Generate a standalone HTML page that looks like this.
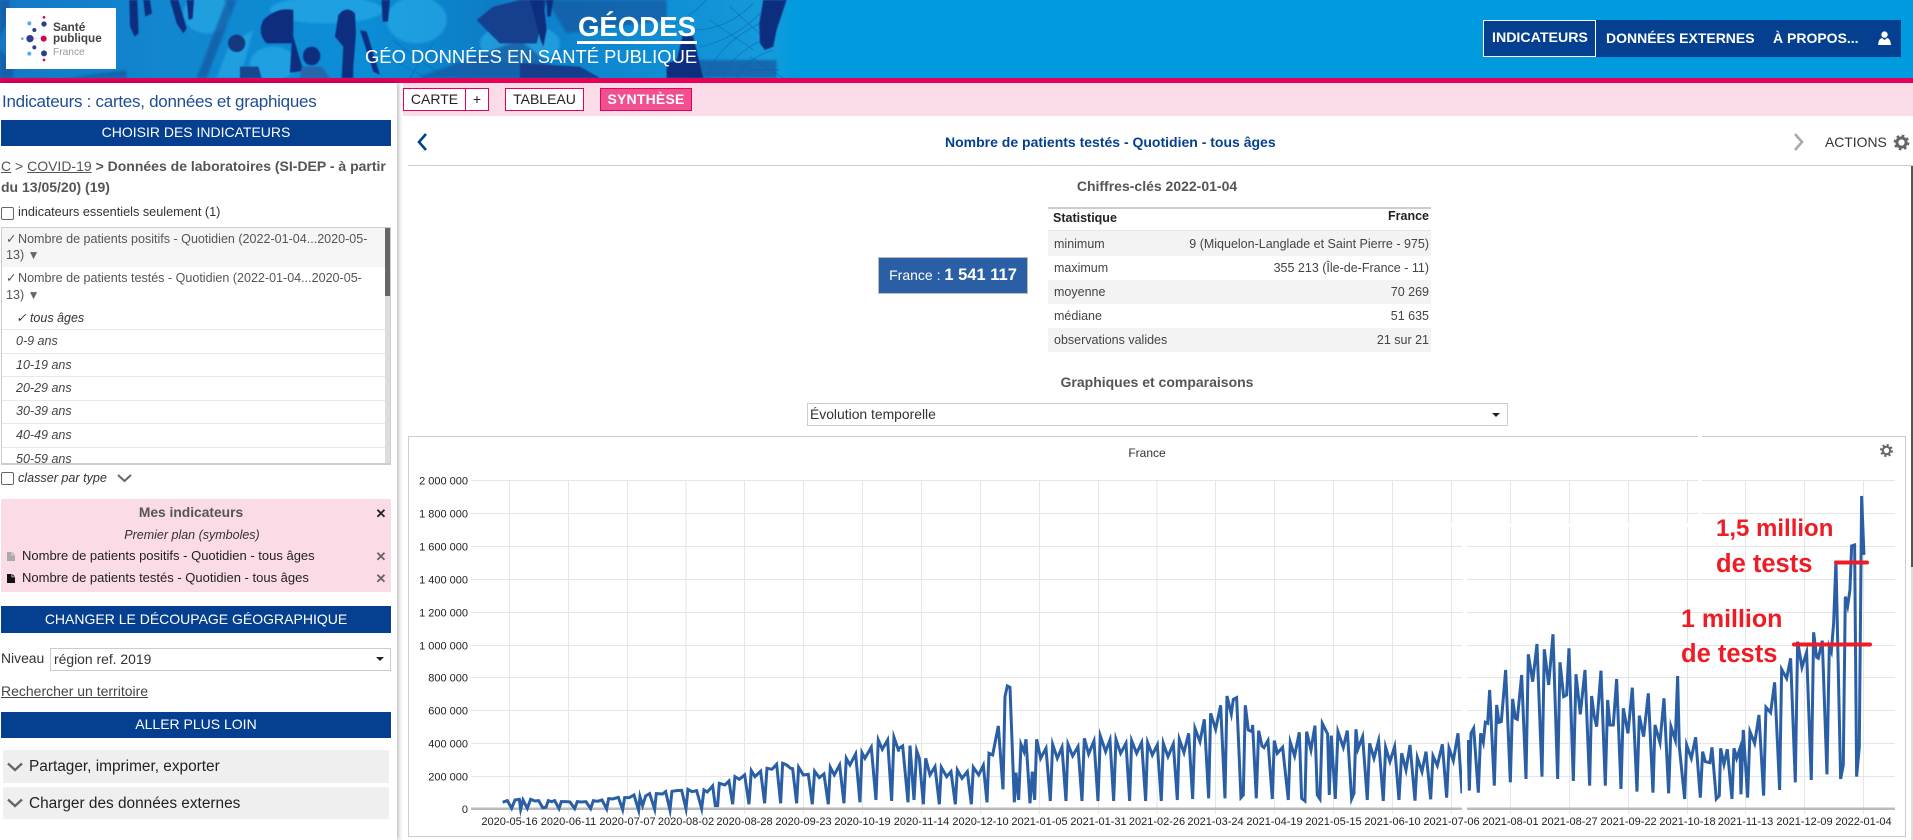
<!DOCTYPE html>
<html lang="fr"><head><meta charset="utf-8"><title>GÉODES</title>
<style>
html,body{margin:0;padding:0;width:1913px;height:840px;overflow:hidden;background:#fff;font-family:"Liberation Sans",Arial,sans-serif;color:#333}
.a{position:absolute}
.t{position:absolute;white-space:nowrap;line-height:20px;height:20px}
.bar{position:absolute;left:1px;width:390px;background:#04408f;color:#fff;text-align:center;font-size:14px}
.sep{position:absolute;left:2px;width:383px;height:1px;background:#e8e8e8}
.it{position:absolute;left:16px;font-style:italic;font-size:12.5px;line-height:20px;white-space:nowrap;color:#444}
.tab{position:absolute;top:88px;height:21px;line-height:21px;border:1px solid #e6005a;background:#fff;color:#222;font-size:14px;text-align:center}
.cb{position:absolute;width:11px;height:11px;border:1px solid #666;border-radius:2px;background:#fff}
.row{position:absolute;left:1048px;width:383px;height:24px;line-height:24px;font-size:12.5px;color:#444}
.row b{font-weight:normal;position:absolute;left:6px}
.row i{font-style:normal;position:absolute;right:2px}
.ck{margin-right:-2px}
.dn{font-size:12px;color:#666}
</style></head><body>

<!-- header -->
<svg class="a" style="left:0;top:0" width="1913" height="78" viewBox="0 0 1913 78">
<defs>
<linearGradient id="h" x1="0" x2="1" y1="0" y2="0"><stop offset="0" stop-color="#1478c4"/><stop offset=".2" stop-color="#1286cf"/><stop offset=".45" stop-color="#0b8ed6"/><stop offset=".62" stop-color="#0d7cc6"/><stop offset=".8" stop-color="#0e8bd2"/><stop offset=".97" stop-color="#159bdc"/><stop offset="1" stop-color="#009bdf"/></linearGradient>
<filter id="bl"><feGaussianBlur stdDeviation="3"/></filter>
<filter id="bs"><feGaussianBlur stdDeviation="1.6"/></filter>
</defs>
<rect width="1913" height="78" fill="#009bdf"/>
<rect width="795" height="78" fill="url(#h)"/>
<g transform="scale(.3333)">
<g filter="url(#bl)" fill="#2fb2ec" opacity=".55">
<ellipse cx="620" cy="40" rx="70" ry="60"/><ellipse cx="980" cy="30" rx="170" ry="40"/><ellipse cx="1250" cy="60" rx="90" ry="70"/>
<ellipse cx="820" cy="190" rx="70" ry="50"/><ellipse cx="1560" cy="130" rx="120" ry="60"/><path d="M690 130 L760 90 L720 234 L650 234Z"/>
</g>
<g filter="url(#bl)" fill="#17569f" opacity=".7">
<path d="M0 0H30L20 70L0 110Z"/><path d="M0 150 L40 190 L40 234 H0Z"/><path d="M680 0h30L620 234H590Z"/>
<path d="M1250 234 L1560 120 L1700 234Z"/><path d="M1640 0H2000V60L1700 100Z"/>
<path d="M2050 180H2330V234H2050Z"/><path d="M200 234L380 210V234Z"/>
</g>
<g fill="none" stroke="#0c5aa6" stroke-width="2" opacity=".65">
<path d="M2120 234Q2150 130 2300 60M2170 234Q2190 160 2310 110M2210 234Q2230 180 2320 150M2100 140Q2200 120 2280 40M2080 90Q2180 90 2260 10M2000 80Q2060 60 2120 0M2240 210H2340M2250 170L2350 234M2130 60L2260 150M2190 20L2300 120"/>
<path d="M1100 140Q1180 180 1280 234M1180 120Q1240 170 1340 234M1300 130Q1260 180 1230 234"/>
</g>
<g filter="url(#bs)" fill="#0f2f7e">
<path d="M388 0h24l4 100-12 10-14-30Z"/><path d="M430 0h20l6 40-20 10Z"/><path d="M510 0h25l25 85-10 15-20-30Z"/><path d="M560 0h22l-4 55-12 5Z"/>
<path d="M790 60 Q830 20 880 30 L880 110 L905 195 L915 212 L870 218 L875 130 L800 130 Q770 100 790 60Z"/>
<ellipse cx="710" cy="130" rx="26" ry="26" fill="#12397f"/>
<ellipse cx="935" cy="168" rx="26" ry="28"/><path d="M905 200h60l25 34H900Z" fill="#2666aa"/>
<path d="M1015 45 Q1040 15 1065 40 L1068 100 L1060 200 L1060 234 H1025 L1030 140 L1005 110Z"/>
<path d="M1080 90 L1100 95 L1140 225 L1120 215Z"/>
<path d="M1145 0h25l-6 65-16 0Z"/>
<path d="M1430 60 L1480 20 L1560 0 L1640 0 L1610 130 L1500 130Z" fill="#123f8e"/>
<path d="M720 200 L775 200 L785 234 H720Z" fill="#17478f"/>
<path d="M1590 0h40l10 90 -10 50 -8-20Z"/><path d="M1640 0h20l-8 50-10 0Z"/>
<path d="M1560 190 L1740 200 L1800 234 H1560Z" fill="#133d8c"/>
<path d="M2050 100 L2080 110 L2110 234 H2000 L2000 190 L2030 180Z"/>
<path d="M2290 0h70l-30 90 -10 50 -25 10 -15-20 -2-60Z"/>
</g>
</g>
</svg>

<!-- logo -->
<div class="a" style="left:6px;top:8px;width:110px;height:61px;background:#fff"></div>
<svg class="a" style="left:0;top:0" width="120" height="75" viewBox="0 0 360 225">
<g stroke="#d8d8e6" stroke-width="1.5"><path d="M90 116H132M103 90L132 116M103 142L132 116M132 72V160"/></g>
<circle cx="132" cy="52" r="4" fill="#d6004f"/><circle cx="88" cy="70" r="6" fill="#5aa9e6"/><circle cx="132" cy="72" r="8" fill="#2c3e8c"/><circle cx="103" cy="90" r="6" fill="#2c3e8c"/><circle cx="67" cy="116" r="4" fill="#5aa9e6"/><circle cx="90" cy="116" r="11" fill="#2c3e8c"/><circle cx="131" cy="116" r="9" fill="#d6004f"/><circle cx="103" cy="142" r="6" fill="#2c3e8c"/><circle cx="88" cy="161" r="6" fill="#5aa9e6"/><circle cx="132" cy="160" r="9" fill="#2c3e8c"/><circle cx="132" cy="180" r="4" fill="#d6004f"/>
</svg>
<div class="t" style="left:53px;top:17px;font-size:11.9px;font-weight:bold;color:#444">Santé</div>
<div class="t" style="left:53px;top:29px;font-size:11.7px;font-weight:bold;color:#444">publique</div>
<div class="t" style="left:53px;top:43px;font-size:10.2px;color:#999">France</div>

<div class="t" style="left:577px;top:15px;width:120px;text-align:center;font-size:27.6px;font-weight:bold;color:#fff;line-height:24px;height:24px">GÉODES</div>
<div class="a" style="left:577px;top:41px;width:120px;height:3px;background:#fff"></div>
<div class="t" style="left:365px;top:47px;font-size:18.4px;color:#fff">GÉO DONNÉES EN SANTÉ PUBLIQUE</div>

<div class="a" style="left:1483px;top:20px;width:418px;height:37px;background:#04408f"></div>
<div class="a" style="left:1483px;top:20px;width:111px;height:35px;border:1px solid #fff"></div>
<div class="t" style="left:1492px;top:28px;font-size:14.2px;font-weight:bold;color:#fff">INDICATEURS</div>
<div class="t" style="left:1606px;top:28px;font-size:14px;font-weight:bold;color:#fff">DONNÉES EXTERNES</div>
<div class="t" style="left:1773px;top:28px;font-size:14px;font-weight:bold;color:#fff">À PROPOS...</div>
<svg class="a" style="left:1877px;top:31px" width="15" height="14" viewBox="0 0 15 14"><circle cx="7.5" cy="3.6" r="3.2" fill="#fff"/><path d="M1 14 Q1.5 7.5 5 7 L7.5 9 L10 7 Q13.5 7.5 14 14Z" fill="#fff"/></svg>

<div class="a" style="left:0;top:78px;width:1913px;height:5px;background:#e6005a"></div>

<!-- pink bar -->
<div class="a" style="left:403px;top:83px;width:1510px;height:33px;background:#fadbe8"></div>
<div class="tab" style="left:403px;width:61px">CARTE</div>
<div class="tab" style="left:465px;width:22px">+</div>
<div class="tab" style="left:505px;width:77px">TABLEAU</div>
<div class="tab" style="left:600px;width:90px;background:#f0508f;color:#fff;font-weight:bold;letter-spacing:.2px">SYNTHÈSE</div>

<!-- left panel -->
<div class="a" style="left:0;top:83px;width:397px;height:757px;box-shadow:1px 0 5px rgba(0,0,0,.35);background:#fff"></div>
<div class="t" style="left:2px;top:92px;font-size:17px;letter-spacing:-.27px;color:#1d4f96">Indicateurs : cartes, données et graphiques</div>
<div class="bar" style="top:120px;height:26px;line-height:25px">CHOISIR DES INDICATEURS</div>
<div class="t" style="left:1px;top:156px;font-size:14px;color:#555"><u>C</u> &gt; <u>COVID-19</u> <b>&gt; Données de laboratoires (SI-DEP - à partir</b></div>
<div class="t" style="left:1px;top:177px;font-size:14px;color:#555"><b>du 13/05/20) (19)</b></div>
<div class="cb" style="left:1px;top:207px"></div>
<div class="t" style="left:18px;top:202px;font-size:12.7px;color:#333">indicateurs essentiels seulement (1)</div>

<div class="a" style="left:1px;top:227px;width:388px;height:236px;border:1px solid #ccc;overflow:hidden;background:#fff">
<div class="a" style="left:0;top:0;width:383px;height:39px;background:#f5f5f5"></div>
</div>
<div class="a" style="left:385px;top:228px;width:5px;height:236px;background:#ddd"></div>
<div class="a" style="left:385px;top:228px;width:5px;height:68px;background:#666"></div>
<div class="t" style="left:6px;top:229px;font-size:12.55px;color:#555"><span class="ck">✓</span> Nombre de patients positifs - Quotidien (2022-01-04...2020-05-</div>
<div class="t" style="left:6px;top:245px;font-size:12.55px;color:#555">13) <span class="dn">▼</span></div>
<div class="t" style="left:6px;top:268px;font-size:12.55px;color:#555"><span class="ck">✓</span> Nombre de patients testés - Quotidien (2022-01-04...2020-05-</div>
<div class="t" style="left:6px;top:285px;font-size:12.55px;color:#555">13) <span class="dn">▼</span></div>
<div class="it" style="top:308px;color:#333">✓ tous âges</div>
<div class="sep" style="top:329px"></div><div class="it" style="top:331px">0-9 ans</div>
<div class="sep" style="top:353px"></div><div class="it" style="top:355px">10-19 ans</div>
<div class="sep" style="top:376px"></div><div class="it" style="top:378px">20-29 ans</div>
<div class="sep" style="top:400px"></div><div class="it" style="top:401px">30-39 ans</div>
<div class="sep" style="top:423px"></div><div class="it" style="top:425px">40-49 ans</div>
<div class="sep" style="top:447px"></div><div class="it" style="top:449px;height:14px;overflow:hidden;line-height:20px">50-59 ans</div>
<div class="a" style="left:1px;top:463px;width:390px;height:1px;background:#ccc"></div>

<div class="cb" style="left:1px;top:472px"></div>
<div class="t" style="left:18px;top:468px;font-size:12.6px;font-style:italic;color:#333">classer par type</div>
<svg class="a" style="left:117px;top:473px" width="15" height="10" viewBox="0 0 15 10"><path d="M1 2L7.5 8L14 2" fill="none" stroke="#666" stroke-width="2"/></svg>

<div class="a" style="left:1px;top:499px;width:390px;height:93px;background:#fbdbe6"></div>
<div class="t" style="left:1px;top:503px;width:380px;text-align:center;font-size:13.8px;font-weight:bold;color:#555">Mes indicateurs</div>
<div class="t" style="left:373px;top:504px;width:16px;text-align:center;font-size:13px;font-weight:bold;color:#222">✕</div>
<div class="t" style="left:1px;top:525px;width:382px;text-align:center;font-size:12.5px;font-style:italic;color:#333">Premier plan (symboles)</div>
<svg class="a" style="left:7px;top:552px" width="8" height="9" viewBox="0 0 8 9"><path d="M0 0H4.5V3.2H8V9H0ZM5.3 0L8 2.5H5.3Z" fill="#aaa"/></svg>
<div class="t" style="left:22px;top:546px;font-size:13px;color:#222">Nombre de patients positifs - Quotidien - tous âges</div>
<div class="t" style="left:373px;top:547px;width:16px;text-align:center;font-size:13px;font-weight:bold;color:#666">✕</div>
<svg class="a" style="left:7px;top:574px" width="8" height="9" viewBox="0 0 8 9"><path d="M0 0H4.5V3.2H8V9H0ZM5.3 0L8 2.5H5.3Z" fill="#111"/></svg>
<div class="t" style="left:22px;top:568px;font-size:13px;color:#222">Nombre de patients testés - Quotidien - tous âges</div>
<div class="t" style="left:373px;top:569px;width:16px;text-align:center;font-size:13px;font-weight:bold;color:#666">✕</div>

<div class="bar" style="top:606px;height:27px;line-height:27px">CHANGER LE DÉCOUPAGE GÉOGRAPHIQUE</div>
<div class="t" style="left:1px;top:648px;font-size:13.9px;color:#333">Niveau</div>
<div class="a" style="left:50px;top:648px;width:339px;height:21px;border:1px solid #ccc;background:#fff"></div>
<div class="t" style="left:54px;top:649px;font-size:13.9px;color:#333">région ref. 2019</div>
<div class="a" style="left:376px;top:657px;border-left:4px solid transparent;border-right:4px solid transparent;border-top:4px solid #222"></div>
<div class="t" style="left:1px;top:681px;font-size:14px;color:#444;text-decoration:underline">Rechercher un territoire</div>
<div class="bar" style="top:712px;height:26px;line-height:25px">ALLER PLUS LOIN</div>
<div class="a" style="left:3px;top:750px;width:386px;height:33px;background:#efefef"></div>
<div class="a" style="left:3px;top:787px;width:386px;height:32px;background:#efefef"></div>
<svg class="a" style="left:7px;top:762px" width="16" height="10" viewBox="0 0 16 10"><path d="M1 1.5L8 8L15 1.5" fill="none" stroke="#666" stroke-width="2.4"/></svg>
<svg class="a" style="left:7px;top:798px" width="16" height="10" viewBox="0 0 16 10"><path d="M1 1.5L8 8L15 1.5" fill="none" stroke="#666" stroke-width="2.4"/></svg>
<div class="t" style="left:29px;top:757px;font-size:15.4px;color:#222">Partager, imprimer, exporter</div>
<div class="t" style="left:29px;top:794px;font-size:15.4px;color:#222">Charger des données externes</div>

<!-- content header -->
<svg class="a" style="left:416px;top:132px" width="13" height="20" viewBox="0 0 13 20"><path d="M10 2L3 10L10 18" fill="none" stroke="#04408f" stroke-width="2.6"/></svg>
<div class="t" style="left:945px;top:132px;font-size:14px;font-weight:bold;color:#04408f">Nombre de patients testés - Quotidien - tous âges</div>
<svg class="a" style="left:1792px;top:132px" width="13" height="20" viewBox="0 0 13 20"><path d="M3 2L10 10L3 18" fill="none" stroke="#aaa" stroke-width="2.6"/></svg>
<div class="t" style="left:1825px;top:132px;font-size:13.9px;color:#333">ACTIONS</div>
<svg class="a" style="left:1893px;top:134px" width="17" height="17" viewBox="0 0 17 17"><circle cx="8.5" cy="8.5" r="4.6" fill="none" stroke="#666" stroke-width="3"/><circle cx="8.5" cy="8.5" r="6.7" fill="none" stroke="#666" stroke-width="2.4" stroke-dasharray="2.6 2.66"/></svg>
<div class="a" style="left:408px;top:165px;width:1505px;height:1px;background:#ccc"></div>
<div class="a" style="left:1911px;top:166px;width:2px;height:674px;background:#ddd"></div>
<div class="a" style="left:1911px;top:166px;width:2px;height:401px;background:#555"></div>

<!-- key figures -->
<div class="t" style="left:957px;top:176px;width:400px;text-align:center;font-size:14px;font-weight:bold;color:#555">Chiffres-clés 2022-01-04</div>
<div class="a" style="left:878px;top:257px;width:148px;height:35px;line-height:35px;border:1px solid #bbb;background:#2a5fa5;color:#fff;text-align:center;font-size:14px;white-space:nowrap">France : <b style="font-size:16.5px">1 541 117</b></div>

<div class="a" style="left:1048px;top:207px;width:383px;height:2px;background:#ccc"></div>
<div class="a" style="left:1048px;top:230px;width:383px;height:1px;background:#e6e6e6"></div>
<div class="t" style="left:1053px;top:208px;font-size:12.5px;font-weight:bold;color:#222">Statistique</div>
<div class="t" style="left:1331px;width:98px;text-align:right;top:206px;font-size:12.5px;font-weight:bold;color:#222">France</div>
<div class="row" style="top:232px;height:24px;background:#f3f3f3"><b>minimum</b><i>9 (Miquelon-Langlade et Saint Pierre - 975)</i></div>
<div class="a" style="left:1048px;top:231px;width:383px;height:1px;background:#f3f3f3"></div>
<div class="row" style="top:256px"><b>maximum</b><i>355 213 (Île-de-France - 11)</i></div>
<div class="row" style="top:280px;background:#f3f3f3"><b>moyenne</b><i>70 269</i></div>
<div class="row" style="top:304px"><b>médiane</b><i>51 635</i></div>
<div class="row" style="top:328px;background:#f3f3f3"><b>observations valides</b><i>21 sur 21</i></div>

<div class="t" style="left:957px;top:372px;width:400px;text-align:center;font-size:14px;font-weight:bold;color:#555">Graphiques et comparaisons</div>
<div class="a" style="left:807px;top:403px;width:699px;height:21px;border:1px solid #ccc;background:#fff"></div>
<div class="t" style="left:810px;top:404px;font-size:13.9px;color:#333">Évolution temporelle</div>
<div class="a" style="left:1492px;top:413px;border-left:4px solid transparent;border-right:4px solid transparent;border-top:4px solid #222"></div>

<!-- chart -->
<svg class="a" style="left:0;top:0" width="1913" height="840" viewBox="0 0 1913 840" font-family="'Liberation Sans',Arial,sans-serif">
<rect x="408.5" y="436.5" width="1497" height="400" fill="#fff" stroke="#ccc"/>
<text x="1147" y="457" font-size="12" fill="#333" text-anchor="middle">France</text>
<g transform="translate(1879.5 443.5)"><circle cx="7" cy="7" r="3.7" fill="none" stroke="#666" stroke-width="2"/><circle cx="7" cy="7" r="5.5" fill="none" stroke="#666" stroke-width="2" stroke-dasharray="2.16 2.16"/></g>
<g stroke="#e6e6e6" stroke-width="1" fill="none">
<path d="M471 480.5H1895M471 513.5H1895M471 546.5H1895M471 579.5H1895M471 612.5H1895M471 645.5H1895M471 677.5H1895M471 710.5H1895M471 743.5H1895M471 776.5H1895"/>
<path d="M509.5 480V814M568.5 480V814M627.5 480V814M686 480V814M744.5 480V814M803.5 480V814M862.5 480V814M921.5 480V814M980.5 480V814M1039.5 480V814M1098.5 480V814M1157 480V814M1215.5 480V814M1274.5 480V814M1333.5 480V814M1392.5 480V814M1451.5 480V814M1510.5 480V814M1569.5 480V814M1628.5 480V814M1687.5 480V814M1745.5 480V814M1804.5 480V814M1863.5 480V814"/>
</g>
<rect x="471" y="807.5" width="1424" height="2.5" fill="#bbb"/>
<g font-size="11" fill="#222" text-anchor="end">
<text x="468" y="484.5">2 000 000</text><text x="468" y="517.5">1 800 000</text><text x="468" y="550.5">1 600 000</text><text x="468" y="583.5">1 400 000</text><text x="468" y="616.5">1 200 000</text><text x="468" y="649.5">1 000 000</text><text x="468" y="681.5">800 000</text><text x="468" y="714.5">600 000</text><text x="468" y="747.5">400 000</text><text x="468" y="780.5">200 000</text><text x="468" y="813">0</text>
</g>
<g font-size="11" fill="#222" text-anchor="middle">
<text x="509.5" y="825">2020-05-16</text><text x="568.5" y="825">2020-06-11</text><text x="627.5" y="825">2020-07-07</text><text x="686" y="825">2020-08-02</text><text x="744.5" y="825">2020-08-28</text><text x="803.5" y="825">2020-09-23</text><text x="862.5" y="825">2020-10-19</text><text x="921.5" y="825">2020-11-14</text><text x="980.5" y="825">2020-12-10</text><text x="1039.5" y="825">2021-01-05</text><text x="1098.5" y="825">2021-01-31</text><text x="1157" y="825">2021-02-26</text><text x="1215.5" y="825">2021-03-24</text><text x="1274.5" y="825">2021-04-19</text><text x="1333.5" y="825">2021-05-15</text><text x="1392.5" y="825">2021-06-10</text><text x="1451.5" y="825">2021-07-06</text><text x="1510.5" y="825">2021-08-01</text><text x="1569.5" y="825">2021-08-27</text><text x="1628.5" y="825">2021-09-22</text><text x="1687.5" y="825">2021-10-18</text><text x="1745.5" y="825">2021-11-13</text><text x="1804.5" y="825">2021-12-09</text><text x="1863.5" y="825">2022-01-04</text>
</g>
<g fill="none" stroke="#2a5fa5" stroke-width="9" stroke-linejoin="miter" stroke-miterlimit="6">
<polyline transform="translate(400 430) scale(.3333)" points="308,1117 322,1112 335,1135 345,1110 358,1108 362,1138 369,1110 382,1135 392,1108 405,1113 416,1112 428,1133 438,1132 445,1112 455,1115 464,1112 477,1136 484,1115 497,1115 510,1116 524,1136 532,1115 545,1116 558,1115 572,1136 580,1112 593,1114 606,1110 620,1137 626,1106 638,1107 655,1102 668,1139 674,1103 688,1103 702,1095 716,1141 720,1100 728,1127 737,1098 749,1091 764,1138 769,1091 788,1092 797,1085 810,1140 816,1084 830,1082 845,1081 858,1136 864,1078 876,1085 890,1082 905,1136 912,1080 922,1086 938,1068 946,1127 953,1127 958,1060 975,1065 987,1053 998,1123 1005,1040 1018,1048 1034,1035 1047,1123 1054,1022 1065,1040 1082,1024 1094,1120 1101,1015 1116,1018 1130,1003 1142,1120 1148,1000 1160,1005 1172,1015 1178,1016 1190,1120 1196,1012 1210,1035 1225,1033 1237,1123 1244,1024 1258,1043 1272,1032 1285,1123 1291,1012 1303,1035 1319,1005 1332,1120 1339,985 1350,1005 1367,972 1380,1117 1386,968 1395,985 1414,952 1428,1110 1435,930 1447,958 1463,930 1475,1113 1482,922 1497,965"/>
<polyline transform="translate(900 430) scale(.3333)" points="-3,955 8,948 24,1117 30,947 42,1110 50,962 58,985 70,1123 77,985 90,1035 105,1010 118,1123 124,1012 140,1040 153,1025 166,1123 172,1020 186,1045 202,1025 214,1123 220,1012 236,1035 250,1006 261,1117 267,970 278,975 295,888 309,1078 315,800 322,768 330,772 343,1117 348,1028 356,1110 363,943 372,965 378,928 390,1120 397,1025 404,1110 410,928 422,985 438,955 451,1113 458,943 472,985 486,952 498,1113 504,943 518,978 534,950 546,1113 553,925 566,972 582,933 594,1113 601,918 617,965 630,930 641,1113 648,928 662,970 678,940 689,1113 695,932 710,970 725,938 737,1113 743,938 757,975 772,945 784,1113 790,940 804,980 820,942 832,1110 838,928 852,968 866,910 878,1107 885,895 900,935 913,868 926,1105 932,850 947,898 962,826 975,1105 981,798 994,852 1000,808 1010,803 1023,1103 1030,1095 1036,826 1045,900 1056,905 1058,885 1069,1105 1076,902 1086,948 1092,953 1104,932 1117,1107 1123,932 1132,970 1148,952 1165,1110 1171,937 1184,978 1198,907 1205,1105 1215,1113 1220,905 1233,960 1245,887 1252,1095 1260,1107 1267,880 1283,912 1288,1095 1294,917 1306,1107 1314,905 1330,952 1342,902 1355,1107 1362,1090 1368,898 1374,957 1388,920 1402,1110 1409,940 1422,985 1436,932 1450,1113 1457,952 1470,995 1484,950 1497,1110"/>
<polyline transform="translate(1400 430) scale(.3333)" points="-3,1110 5,970 18,1020 30,945 45,1112 52,983 66,1025 78,965 92,1108 99,978 112,1007 127,943 140,1103 147,955 160,992 174,910 186,1090"/>
<polyline transform="translate(1400 430) scale(.3333)" points="204,930 208,1082 213,910 221,895 235,1088 242,910 250,937 256,877 263,880 269,780 283,1067 290,825 297,877 304,875 317,720 331,1057 338,807 346,865 352,868 365,735 378,1047 385,673 398,755 411,642 426,1040 433,658 446,765 459,613 473,1047 480,697 491,800 500,795 507,655 520,1053 528,733 541,853 555,720 569,1067 575,798 583,860 590,890 603,722 616,1067 623,810 630,885 640,885 650,747 663,1077 670,835 684,910 697,773 711,1085 718,857 731,920 745,790 759,1088 765,885 780,938 792,805 806,1090 813,890 826,930 833,738 838,950 854,1107 860,945 874,985 887,922 901,1103 908,965 916,995 930,998 936,952 949,1107 958,1097 962,955 972,1003 982,958 996,1107 1002,955 1010,985 1020,955 1023,1093 1030,900 1043,1103 1050,905 1064,940 1077,855 1091,1097 1098,832 1112,848 1124,757 1139,1080 1145,718 1160,745 1172,685 1186,1057 1193,635 1206,712 1220,667 1234,1050 1241,607 1250,682 1255,685 1267,632 1281,1033 1288,650 1294,665 1301,580 1308,392 1322,1047 1330,1005 1336,500 1343,528 1350,480 1355,348 1364,345 1370,1040 1378,950 1385,198 1392,375"/>
</g>
<rect x="1462" y="545" width="5" height="268" fill="#fff"/>
<rect x="1400" y="523" width="300" height="4" fill="#fff"/>
<rect x="1698" y="436" width="4" height="88" fill="#fff"/>
<g fill="#ee1c25" font-weight="bold">
<text x="1716" y="536" font-size="24">1,5 million</text><text x="1716" y="572" font-size="25.5">de tests</text>
<text x="1681" y="627" font-size="25">1 million</text><text x="1681" y="662" font-size="25.5">de tests</text>
</g>
<g stroke="#ee1c25" stroke-width="4" stroke-linecap="round"><path d="M1836 562.5H1867M1794 644.5H1870"/></g>
</svg>
</body></html>
